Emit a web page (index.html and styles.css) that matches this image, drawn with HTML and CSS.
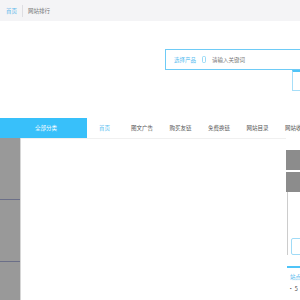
FILE: index.html
```html
<!DOCTYPE html>
<html lang="zh">
<head>
<meta charset="utf-8">
<link rel="stylesheet" href="styles.css">
</head>
<body>
<div class="topbar">
  <a class="crumb-home">首页</a>
  <span class="crumb-sep"></span>
  <a class="crumb">网站排行</a>
</div>
<div class="header">
  <div class="search">
    <span class="search-type">选择产品</span>
    <span class="search-caret"><svg width="4" height="7" viewBox="0 0 4 7"><rect x="0.5" y="0.5" width="3" height="6" rx="1" fill="none" stroke="#7fd0f5" stroke-width="0.8"/></svg></span>
    <span class="search-input">请输入关键词</span>
  </div>
  <div class="search-btn"></div>
</div>
<div class="nav">
  <div class="cat">全部分类</div>
  <a class="nav-item active">首页</a>
  <a class="nav-item">图文广告</a>
  <a class="nav-item">购买友链</a>
  <a class="nav-item">免费换链</a>
  <a class="nav-item">网站目录</a>
  <a class="nav-item">网站收录</a>
</div>
<div class="main">
  <div class="side">
    <div class="side-block"></div>
    <div class="side-block"></div>
    <div class="side-block"></div>
  </div>
  <div class="content"></div>
  <div class="aside">
    <div class="gbox"></div>
    <div class="gbox"></div>
    <div class="aside-panel">
      <div class="pill"></div>
    </div>
    <div class="aside-title">站点</div>
    <div class="aside-li">• 5</div>
  </div>
</div>
</body>
</html>
```
FILE: styles.css
```css
html, body {
  margin: 0;
  padding: 0;
  overflow: hidden;
  width: 300px;
  height: 300px;
  background: #fff;
  font-family: "Noto Sans CJK SC", "Noto Sans", sans-serif;
  font-size: 5.5px;
}
a { text-decoration: none; }
.topbar {
  height: 21px;
  background: #f4f4f6;
  display: flex;
  align-items: center;
  padding-left: 6px;
}
.crumb-home { color: #5ab6ea; }
.crumb-sep {
  width: 1px;
  height: 12px;
  background: #dedee2;
  margin: 0 5px;
}
.crumb { color: #777; }
.header {
  height: 97px;
  padding-left: 165px;
  padding-top: 28px;
  box-sizing: border-box;
  overflow: hidden;
}
.search {
  width: 160px;
  height: 21px;
  box-sizing: border-box;
  border: 1.5px solid #6ecbf6;
  border-right: none;
  display: flex;
  align-items: center;
  padding-left: 8px;
}
.search-type { color: #58bdf0; }
.search-caret { margin-left: 6px; display: flex; }
.search-input { color: #777; margin-left: 6px; }
.search-btn {
  margin-left: 127px;
  width: 40px;
  height: 21px;
  box-sizing: border-box;
  border: 1.5px solid #a6def8;
  border-top: 2px solid #4fc4f8;
}
.nav {
  height: 20px;
  display: flex;
  align-items: center;
  white-space: nowrap;
  overflow: hidden;
}
.nav > * { flex-shrink: 0; }
.cat {
  width: 87px;
  height: 20px;
  box-sizing: border-box;
  background: #38c0fa;
  color: #fff;
  padding-left: 35px;
  line-height: 20px;
}
.nav-item {
  color: #555;
  margin-left: 16.5px;
}
.nav-item.active {
  color: #55bdf0;
  margin-left: 12px;
  margin-right: 4.5px;
}
.main {
  display: flex;
  height: 162px;
  overflow: hidden;
}
.side {
  width: 20px;
  flex-shrink: 0;
  background: #999;
  border-right: 1px solid #d6d6d6;
}
.side-block {
  height: 61px;
  border-bottom: 1px solid #6b6f88;
}
.content {
  width: 265px;
  flex-shrink: 0;
  border-top: 1px solid #f0f0f0;
}
.aside {
  width: 60px;
  flex-shrink: 0;
  padding-top: 12px;
}
.gbox {
  height: 20px;
  background: #8c8c8c;
  margin-bottom: 2px;
}
.aside-panel {
  height: 63px;
  margin-top: -2px;
  border-left: 1px solid #ccc;
  margin-left: 1px;
  display: flex;
  align-items: flex-end;
}
.pill {
  margin-left: 3px;
  width: 20px;
  height: 17px;
  box-sizing: border-box;
  border: 1px solid #a0dbf7;
  border-radius: 2px;
}
.aside-title {
  margin-top: 11px;
  margin-left: 1px;
  border-top: 2px solid #4fc4f8;
  color: #4fb6ec;
  padding: 5px 0 0 3px;
}
.aside-li {
  color: #444;
  padding: 4px 0 0 2px;
}
```
